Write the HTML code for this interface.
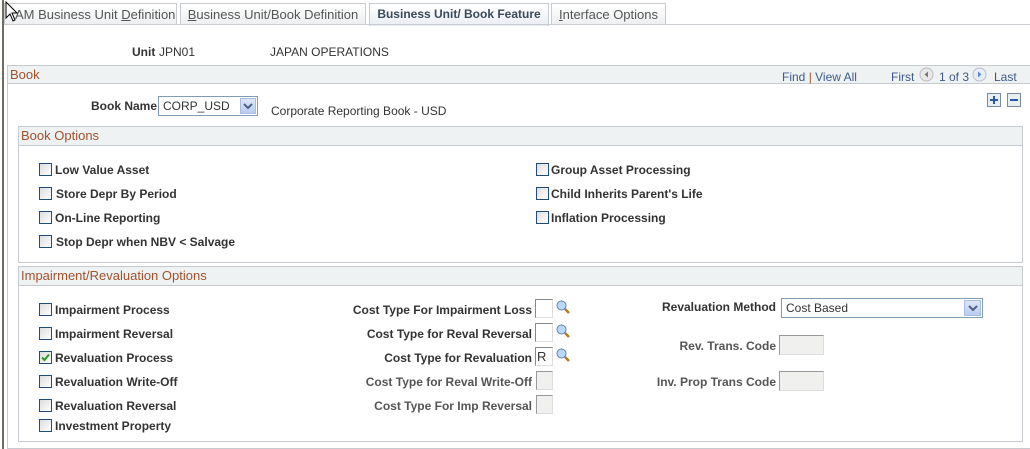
<!DOCTYPE html>
<html><head><meta charset="utf-8"><style>
*{box-sizing:border-box;margin:0;padding:0}
body{width:1030px;height:449px;background:#fff;font-family:"Liberation Sans",Arial,sans-serif;font-size:12px;color:#333;position:relative;overflow:hidden}
.a{position:absolute;white-space:nowrap}
.tab{position:absolute;top:3px;height:22px;border:1px solid #c8ccd0;border-bottom:none;background:linear-gradient(#fff,#eceef0);color:#555;font-size:13px;line-height:21px;text-align:center;white-space:nowrap;overflow:hidden}
.tab u{text-decoration:underline}
.box{position:absolute;border:1px solid #c7cbd0}
.hdr{position:absolute;left:0;right:0;top:0;height:19px;background:#eff2f3;border-bottom:1px solid #c7cbd0;color:#a0522d;font-size:13px;line-height:18px;padding-left:2px}
.cb{position:absolute;width:13px;height:13px;border:1px solid #1e4d7b;background:linear-gradient(135deg,#ddd,#fff)}
.lb{position:absolute;font-weight:bold;font-size:12px;white-space:nowrap;color:#333}
.r{text-align:right}
.in{position:absolute;border:1px solid #888;border-right-color:#ddd;border-bottom-color:#ddd;background:#fff}
.dis{background:#f0f0ee;border-color:#999 #ddd #ddd #999}
.mag{position:absolute;width:14px;height:14px}
</style></head><body>
<div class="a" style="left:2px;top:0;width:2px;height:449px;background:#6e6e60"></div>
<div class="tab" style="left:4px;width:173px;text-align:left;padding-left:10px">AM Business Unit <u>D</u>efinition</div>
<div class="tab" style="left:180px;width:186px"><u>B</u>usiness Unit/Book Definition</div>
<div class="tab" style="left:369px;width:180px;background:linear-gradient(#fff,#e8eef5);font-weight:bold;color:#3a4a5a;height:23px;font-size:12px">Business Unit/ Book Feature</div>
<div class="tab" style="left:551px;width:115px"><u>I</u>nterface Options</div>
<div class="a" style="left:4px;top:24px;width:1026px;height:1px;background:#c8ccd0"></div>
<svg class="a" style="left:5px;top:1px" width="16" height="22" viewBox="0 0 16 22"><path d="M1 1 L1 17 L5 13 L8 20 L10 19 L7 12 L12 12 Z" fill="#fff" stroke="#000" stroke-width="1"/></svg>

<div class="lb" style="left:132px;top:45px">Unit</div>
<div class="a" style="left:159px;top:45px">JPN01</div>
<div class="a" style="left:270px;top:45px">JAPAN OPERATIONS</div>

<div class="box" style="left:7px;top:65px;width:1030px;height:384px;border-right:none">
 <div class="hdr" style="height:18px">Book</div>
</div>
<div class="a" style="left:782px;top:70px;color:#3d5a8a">Find <span style="color:#a0522d">|</span> View All</div>
<div class="a" style="left:891px;top:70px;color:#3d5a8a">First</div>
<svg class="a" style="left:919px;top:67px" width="15" height="15"><circle cx="7.5" cy="7.5" r="6.5" fill="#e8e8e8" stroke="#bbb"/><path d="M9 4.5 L5.5 7.5 L9 10.5Z" fill="#777"/></svg>
<div class="a" style="left:939px;top:70px;color:#3d5a8a">1 of 3</div>
<svg class="a" style="left:972px;top:67px" width="15" height="15"><circle cx="7.5" cy="7.5" r="6.5" fill="#e8eef8" stroke="#bbc"/><path d="M6 4.5 L9.5 7.5 L6 10.5Z" fill="#5a8ad0"/></svg>
<div class="a" style="left:994px;top:70px;color:#3d5a8a">Last</div>
<svg class="a" style="left:987px;top:93px" width="14" height="14"><rect x=".5" y=".5" width="13" height="13" fill="#e9eef2" stroke="#7a8a9a"/><path d="M3 7H11M7 3V11" stroke="#2a5aa0" stroke-width="2"/></svg>
<svg class="a" style="left:1007px;top:93px" width="14" height="14"><rect x=".5" y=".5" width="13" height="13" fill="#e9eef2" stroke="#7a8a9a"/><path d="M3 7H11" stroke="#2a5aa0" stroke-width="2"/></svg>

<div class="lb" style="left:91px;top:99px">Book Name</div>
<div class="in" style="left:158px;top:96px;width:100px;height:20px;border:1px solid #7f9db9;line-height:18px;padding-left:4px">CORP_USD</div>
<div class="a" style="left:240px;top:98px;width:16px;height:16px;background:linear-gradient(#dce6f8,#b8ccf0);border:1px solid #a8bce0"></div>
<svg class="a" style="left:243px;top:102px" width="10" height="8"><path d="M1 2 L5 6 L9 2" stroke="#4d6185" stroke-width="2" fill="none"/></svg>
<div class="a" style="left:271px;top:104px">Corporate Reporting Book - USD</div>

<div class="box" style="left:18px;top:126px;width:1005px;height:137px"><div class="hdr">Book Options</div></div>
<div class="cb" style="left:39px;top:163px"></div><div class="lb" style="left:55px;top:163px">Low Value Asset</div>
<div class="cb" style="left:39px;top:187px"></div><div class="lb" style="left:56px;top:187px">Store Depr By Period</div>
<div class="cb" style="left:39px;top:211px"></div><div class="lb" style="left:55px;top:211px">On-Line Reporting</div>
<div class="cb" style="left:39px;top:235px"></div><div class="lb" style="left:56px;top:235px">Stop Depr when NBV &lt; Salvage</div>
<div class="cb" style="left:536px;top:163px"></div><div class="lb" style="left:551px;top:163px">Group Asset Processing</div>
<div class="cb" style="left:536px;top:187px"></div><div class="lb" style="left:551px;top:187px">Child Inherits Parent's Life</div>
<div class="cb" style="left:536px;top:211px"></div><div class="lb" style="left:551px;top:211px">Inflation Processing</div>

<div class="box" style="left:18px;top:266px;width:1005px;height:176px"><div class="hdr">Impairment/Revaluation Options</div></div>
<div class="cb" style="left:39px;top:303px"></div><div class="lb" style="left:55px;top:303px">Impairment Process</div>
<div class="cb" style="left:39px;top:327px"></div><div class="lb" style="left:55px;top:327px">Impairment Reversal</div>
<div class="cb" style="left:39px;top:351px"></div><div class="lb" style="left:55px;top:351px">Revaluation Process</div>
<svg class="a" style="left:40px;top:352px" width="11" height="11"><path d="M2 5.5 L4.5 8 L9 2.5" stroke="#2a9a2a" stroke-width="2" fill="none"/></svg>
<div class="cb" style="left:39px;top:375px"></div><div class="lb" style="left:55px;top:375px">Revaluation Write-Off</div>
<div class="cb" style="left:39px;top:399px"></div><div class="lb" style="left:55px;top:399px">Revaluation Reversal</div>
<div class="cb" style="left:39px;top:419px"></div><div class="lb" style="left:55px;top:419px">Investment Property</div>

<div class="lb r" style="left:300px;width:232px;top:303px">Cost Type For Impairment Loss</div>
<div class="lb r" style="left:300px;width:232px;top:327px">Cost Type for Reval Reversal</div>
<div class="lb r" style="left:300px;width:232px;top:351px">Cost Type for Revaluation</div>
<div class="lb r" style="left:300px;width:232px;top:375px;color:#555">Cost Type for Reval Write-Off</div>
<div class="lb r" style="left:300px;width:232px;top:399px;color:#555">Cost Type For Imp Reversal</div>
<div class="in" style="left:535px;top:299px;width:18px;height:19px"></div>
<div class="in" style="left:535px;top:323px;width:18px;height:19px"></div>
<div class="in" style="left:535px;top:347px;width:18px;height:19px;padding-left:1px;line-height:17px;font-size:13px">R</div>
<div class="in dis" style="left:536px;top:371px;width:17px;height:19px"></div>
<div class="in dis" style="left:536px;top:395px;width:17px;height:19px"></div>
<svg class="mag" style="left:556px;top:300px" viewBox="0 0 14 14"><circle cx="5.5" cy="5.5" r="4.5" fill="#bcd8f4" stroke="#5a88b8"/><path d="M9 9 L13 13" stroke="#b87a2a" stroke-width="2.5"/></svg>
<svg class="mag" style="left:556px;top:324px" viewBox="0 0 14 14"><circle cx="5.5" cy="5.5" r="4.5" fill="#bcd8f4" stroke="#5a88b8"/><path d="M9 9 L13 13" stroke="#b87a2a" stroke-width="2.5"/></svg>
<svg class="mag" style="left:556px;top:348px" viewBox="0 0 14 14"><circle cx="5.5" cy="5.5" r="4.5" fill="#bcd8f4" stroke="#5a88b8"/><path d="M9 9 L13 13" stroke="#b87a2a" stroke-width="2.5"/></svg>

<div class="lb r" style="left:600px;width:176px;top:300px">Revaluation Method</div>
<div class="in" style="left:781px;top:298px;width:202px;height:20px;border:1px solid #7f9db9;line-height:18px;padding-left:4px">Cost Based</div>
<div class="a" style="left:964px;top:300px;width:17px;height:16px;background:linear-gradient(#dce6f8,#b8ccf0);border:1px solid #a8bce0"></div>
<svg class="a" style="left:968px;top:304px" width="10" height="8"><path d="M1 2 L5 6 L9 2" stroke="#4d6185" stroke-width="2" fill="none"/></svg>
<div class="lb r" style="left:600px;width:176px;top:339px;color:#555">Rev. Trans. Code</div>
<div class="in dis" style="left:779px;top:335px;width:45px;height:20px"></div>
<div class="lb r" style="left:600px;width:176px;top:375px;color:#555">Inv. Prop Trans Code</div>
<div class="in dis" style="left:779px;top:371px;width:45px;height:20px"></div>
</body></html>
